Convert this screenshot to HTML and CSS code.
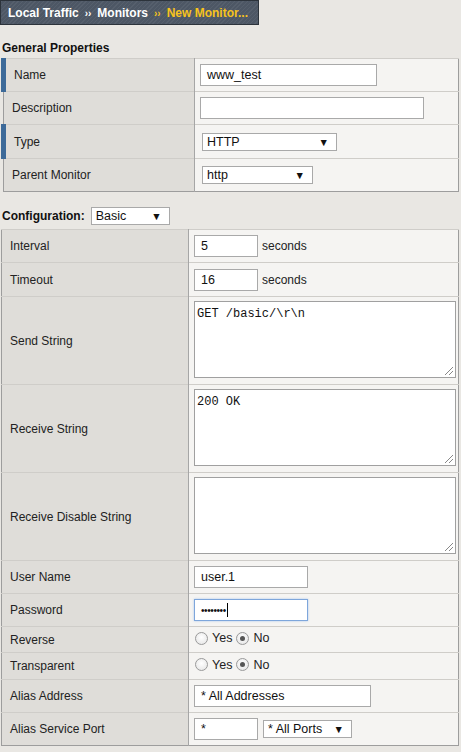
FILE: index.html
```html
<!DOCTYPE html>
<html>
<head>
<meta charset="utf-8">
<link rel="stylesheet" href="styles.css">
</head>
<body>
<div class="crumb"><span>Local Traffic</span><span class="sep">››</span><span>Monitors</span><span class="sep cur">››</span><span class="cur">New Monitor...</span></div>

<div class="title">General Properties</div>
<table class="props t1">
  <colgroup><col class="c1"><col></colgroup>
  <tr class="h33"><td class="lbl mark">Name</td><td class="val"><span class="inp w177">www_test</span></td></tr>
  <tr class="h33"><td class="lbl">Description</td><td class="val"><span class="inp w224"></span></td></tr>
  <tr class="h34"><td class="lbl mark">Type</td><td class="val"><span class="sel w135 ml2"><span>HTTP</span><span class="arr">▼</span></span></td></tr>
  <tr class="h33"><td class="lbl">Parent Monitor</td><td class="val"><span class="sel w111 ml2"><span>http</span><span class="arr">▼</span></span></td></tr>
</table>

<div class="config"><span class="clabel">Configuration:</span><span class="sel w79"><span>Basic</span><span class="arr">▼</span></span></div>

<table class="props t2">
  <colgroup><col class="c1"><col></colgroup>
  <tr class="h33"><td class="lbl">Interval</td><td class="val"><span class="inp w64">5</span><span class="unit">seconds</span></td></tr>
  <tr class="h34"><td class="lbl">Timeout</td><td class="val"><span class="inp w64">16</span><span class="unit">seconds</span></td></tr>
  <tr class="h88"><td class="lbl">Send String</td><td class="val top"><div class="ta">GET /basic/\r\n<span class="grip"></span></div></td></tr>
  <tr class="h88"><td class="lbl">Receive String</td><td class="val top"><div class="ta">200 OK<span class="grip"></span></div></td></tr>
  <tr class="h88"><td class="lbl">Receive Disable String</td><td class="val top"><div class="ta"><span class="grip"></span></div></td></tr>
  <tr class="h33"><td class="lbl">User Name</td><td class="val"><span class="inp w114">user.1</span></td></tr>
  <tr class="h33"><td class="lbl">Password</td><td class="val"><span class="inp w114 focus"><span class="dots">••••••••</span><span class="caret"></span></span></td></tr>
  <tr class="h26"><td class="lbl">Reverse</td><td class="val"><span class="radios"><span class="radio"></span><span>Yes</span><span class="radio on"></span><span>No</span></span></td></tr>
  <tr class="h27"><td class="lbl">Transparent</td><td class="val"><span class="radios"><span class="radio"></span><span>Yes</span><span class="radio on"></span><span>No</span></span></td></tr>
  <tr class="h33"><td class="lbl">Alias Address</td><td class="val"><span class="inp w177">* All Addresses</span></td></tr>
  <tr class="h33"><td class="lbl">Alias Service Port</td><td class="val"><span class="inp w64">*</span><span class="sel w89 ml5"><span>* All Ports</span><span class="arr">▼</span></span></td></tr>
</table>
</body>
</html>
```
FILE: styles.css
```css
html, body {
  margin: 0;
  padding: 0;
}
body {
  background: #e9e7e3;
  font-family: "Liberation Sans", Arial, sans-serif;
  font-size: 12px;
  color: #1a1a1a;
  width: 461px;
  height: 752px;
  overflow: hidden;
}
.crumb {
  box-sizing: border-box;
  width: 259px;
  height: 25px;
  border: 1px solid #2c333b;
  background-color: #4d5765;
  background-image: repeating-linear-gradient(135deg, rgba(255,255,255,0.05) 0 1px, rgba(0,0,0,0) 1px 3px);
  color: #ffffff;
  font-weight: bold;
  font-size: 12px;
  display: flex;
  align-items: center;
  padding-left: 7px;
}
.crumb .sep {
  font-size: 10px;
  margin: 2px 6px 0 6px;
}
.crumb .cur {
  color: #f7c31c;
}
.title {
  font-weight: bold;
  font-size: 12px;
  color: #111;
  padding: 16px 0 0 2px;
  height: 17px;
  line-height: 15px;
}
.props {
  border-collapse: collapse;
  table-layout: fixed;
  margin-left: 1px;
  width: 458px;
  border: 1px solid #9d9d9d;
}
.t1 .c1 { width: 191px; }
.t2 .c1 { width: 187px; }
.props td {
  padding: 0;
  border-top: 1px solid #cfcdc9;
  vertical-align: middle;
}
.lbl {
  background: #dfddd9;
  border-right: 1px solid #a6a6a6;
  padding-left: 8px !important;
  color: #222;
}
.lbl.mark {
  border-left: 5px solid #3d6a99;
  padding-left: 8px !important;
}
.val {
  background: #f5f4f2;
  padding-left: 5px !important;
  padding-right: 3px !important;
}
.val.top {
  vertical-align: top;
  padding-top: 4px !important;
}
.h33 { height: 33px; }
.h34 { height: 34px; }
.h88 { height: 88px; }
.h26 { height: 26px; }
.h27 { height: 27px; }
.inp {
  display: inline-flex;
  align-items: center;
  box-sizing: border-box;
  height: 22px;
  background: #fff;
  border: 1px solid #a9a9a9;
  padding-left: 6px;
  vertical-align: middle;
  font-size: 12.5px;
  color: #111;
}
.inp.focus {
  border-color: #7ea6db;
  box-shadow: 0 0 2px #a8c6ee;
}
.dots {
  font-size: 10px;
  letter-spacing: -0.4px;
  line-height: 1;
  margin-top: 1px;
}
.caret {
  display: inline-block;
  width: 1px;
  height: 14px;
  background: #000;
  margin-left: 1px;
}
.w177 { width: 177px; }
.w224 { width: 224px; }
.w64 { width: 64px; }
.w114 { width: 114px; }
.sel {
  display: inline-flex;
  align-items: center;
  justify-content: space-between;
  box-sizing: border-box;
  height: 18px;
  background: #fff;
  border: 1px solid #a9a9a9;
  padding: 0 7px 0 4px;
  vertical-align: middle;
  font-size: 12.5px;
  color: #111;
}
.sel .arr {
  font-size: 10.5px;
  color: #111;
}
.w135 { width: 135px; }
.w111 { width: 111px; }
.w79 { width: 79px; }
.w89 { width: 89px; }
.ml2 { margin-left: 2px; }
.ml5 { margin-left: 5px; }
.unit {
  margin-left: 4px;
  vertical-align: middle;
  color: #222;
}
.config {
  display: flex;
  align-items: center;
  height: 18px;
  margin-top: 15px;
  margin-bottom: 4px;
  padding-left: 2px;
}
.clabel {
  font-weight: bold;
  margin-right: 6px;
  color: #111;
}
.ta {
  position: relative;
  box-sizing: border-box;
  width: 262px;
  height: 77px;
  background: #fff;
  border: 1px solid #a0a0a0;
  font-family: "Liberation Mono", "Courier New", monospace;
  font-size: 12px;
  padding: 5px 2px;
  color: #111;
  white-space: pre;
}
.grip {
  position: absolute;
  right: 2px;
  bottom: 2px;
  width: 8px;
  height: 8px;
  background: linear-gradient(135deg, transparent 0 45%, #888 45% 55%, transparent 55% 70%, #888 70% 80%, transparent 80%);
}
.radios {
  display: inline-flex;
  align-items: center;
  gap: 4px;
  margin-left: 1px;
  color: #222;
  font-size: 12.5px;
}
.radio {
  display: inline-block;
  box-sizing: border-box;
  width: 13px;
  height: 13px;
  border-radius: 50%;
  border: 1px solid #9a9a9a;
  background: radial-gradient(circle at 50% 40%, #ffffff 0%, #e2e2e2 100%);
  position: relative;
}
.radio.on::after {
  content: "";
  position: absolute;
  left: 3px;
  top: 3px;
  width: 5px;
  height: 5px;
  border-radius: 50%;
  background: #555;
}
```
